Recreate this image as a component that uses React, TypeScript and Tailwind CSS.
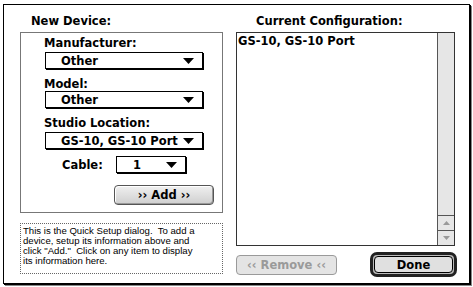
import React from 'react';

const Arrow: React.FC = () => (
  <svg width="11" height="6" viewBox="0 0 11 6" className="shrink-0">
    <polygon points="0,0 11,0 5.5,6" fill="#000" />
  </svg>
);

const Popup: React.FC<{ value: string; className: string }> = ({ value, className }) => (
  <div
    className={`flex h-[17px] items-center justify-between border border-black bg-white pl-[15px] pr-[8px] leading-[14px] shadow-[1px_1px_0_#000] ${className}`}
  >
    <span>{value}</span>
    <Arrow />
  </div>
);

const App: React.FC = () => {
  return (
    <div className="h-[287px] w-[473px] bg-white pl-[3px] pt-[4px] font-['DejaVu_Sans',sans-serif] text-[11.5px] font-bold text-black">
      <div className="flex h-[280px] w-[467px] border border-black bg-white pl-[16px] pr-[12px] pt-[9px] shadow-[1px_1px_0_#000,2px_2px_0_#888]">
        {/* left column */}
        <div className="flex w-[203px] flex-col">
          <div className="h-[18px] pl-[11px] leading-[14px]">New Device:</div>

          <div className="flex h-[181px] flex-col border border-[#777] pl-[24px] pt-[3px]">
            <div className="-ml-[1px] leading-[14px]">Manufacturer:</div>
            <Popup value="Other" className="mt-[2px] w-[158px]" />
            <div className="-ml-[1px] mt-[8px] leading-[14px]">Model:</div>
            <Popup value="Other" className="w-[158px]" />
            <div className="-ml-[1px] mt-[8px] leading-[14px]">Studio Location:</div>
            <Popup value="GS-10, GS-10 Port" className="mt-[2px] w-[158px]" />
            <div className="mt-[7px] flex items-center">
              <div className="w-[71px] pl-[17px] leading-[14px]">Cable:</div>
              <Popup value="1" className="w-[70px] !pl-[16px]" />
            </div>
            <button className="mr-[8px] mt-[12px] flex h-[20px] w-[100px] items-center justify-center self-end rounded-[4px] border border-[#555] bg-gradient-to-b from-[#f0f0f0] to-[#cfcfcf] leading-[14px] shadow-[inset_-1px_-1px_0_#999,inset_1px_1px_0_#fff]">
              ›› Add ››
            </button>
          </div>

          <div className="mt-[10px] h-[51px] border border-dotted border-[#666] px-[2px] pt-[2px] font-['Liberation_Sans',sans-serif] text-[9.6px] font-normal leading-[10px] whitespace-pre">
            <div>This is the Quick Setup dialog.  To add a</div>
            <div>device, setup its information above and</div>
            <div>click "Add."  Click on any item to display</div>
            <div>its information here.</div>
          </div>
        </div>

        {/* right column */}
        <div className="ml-[13px] flex w-[221px] flex-col">
          <div className="h-[18px] pl-[20px] leading-[14px]">Current Configuration:</div>

          <div className="flex h-[214px] w-[219px] border border-[#333] bg-white">
            <div className="flex-1 pl-[1px] pt-[1px] leading-[14px]">GS-10, GS-10 Port</div>
            <div className="flex w-[17px] flex-col justify-end border-l border-[#555] bg-[#e6e6e6]">
              <div className="flex h-[15px] items-center justify-center border-t border-[#555]">
                <svg width="7" height="4" viewBox="0 0 7 4">
                  <polygon points="3.5,0 7,4 0,4" fill="#999" />
                </svg>
              </div>
              <div className="flex h-[15px] items-center justify-center border-t border-[#555]">
                <svg width="7" height="4" viewBox="0 0 7 4">
                  <polygon points="0,0 7,0 3.5,4" fill="#999" />
                </svg>
              </div>
            </div>
          </div>

          <div className="mt-[6px] flex h-[25px] items-center justify-between">
            <button className="flex h-[20px] w-[101px] items-center justify-center rounded-[4px] border border-[#9a9a9a] bg-[#e4e4e4] leading-[14px] text-[#9a9a9a]">
              ‹‹ Remove ‹‹
            </button>
            <div className="h-[25px] w-[87px] rounded-[7px] border-[3px] border-[#222] bg-[#bbb] p-[1px]">
              <button className="flex h-full w-full items-center justify-center rounded-[4px] border border-black bg-[#e0e0e0] leading-[14px]">
                Done
              </button>
            </div>
          </div>
        </div>
      </div>
    </div>
  );
};

export default App;
